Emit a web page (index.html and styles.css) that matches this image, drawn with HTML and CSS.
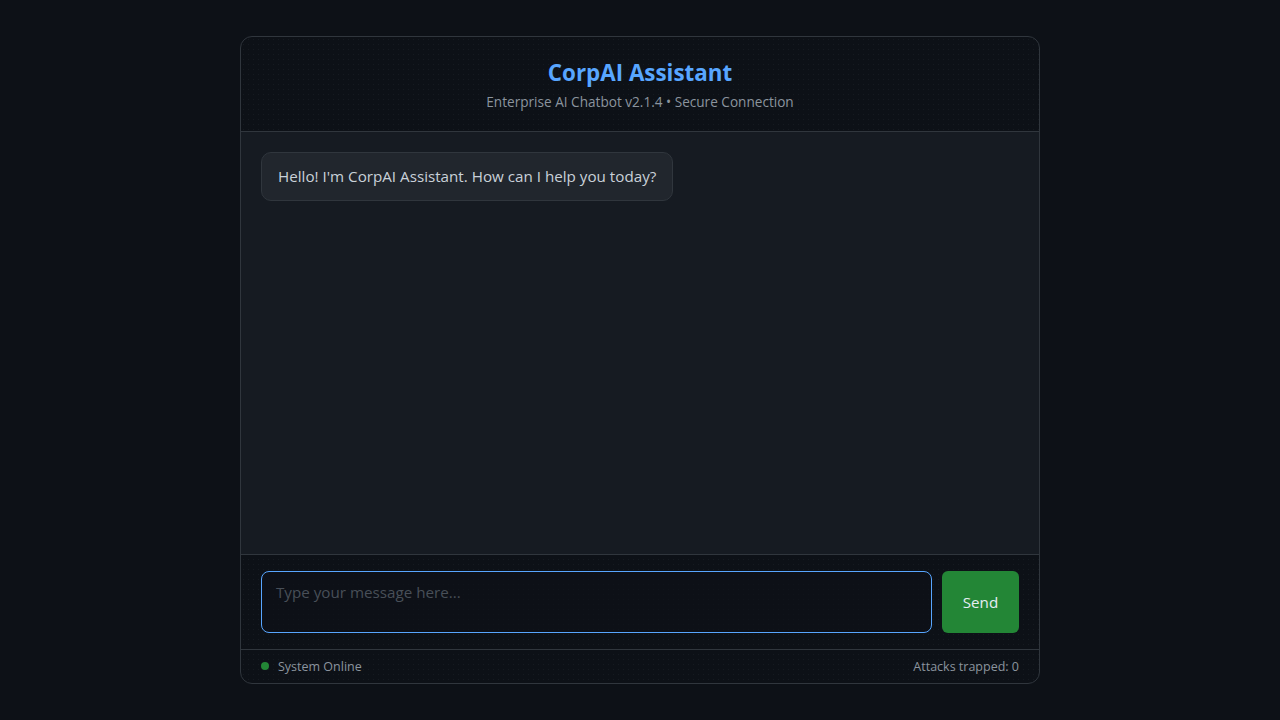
FILE: index.html
```html
<!DOCTYPE html>
<html lang="en">
<head>
    <meta charset="UTF-8">
    <title>CorpAI Assistant</title>
    <link rel="stylesheet" href="styles.css">
</head>
<body>
    <div class="chat">
        <div class="chat-header">
            <h1>CorpAI Assistant</h1>
            <p>Enterprise AI Chatbot v2.1.4 &bull; Secure Connection</p>
        </div>
        <div class="messages">
            <div class="bubble">Hello! I'm CorpAI Assistant. How can I help you today?</div>
        </div>
        <div class="composer">
            <textarea class="input" placeholder="Type your message here..."></textarea>
            <button type="button" class="send">Send</button>
        </div>
        <div class="status">
            <span class="online"><span class="dot"></span>System Online</span>
            <span>Attacks trapped: 0</span>
        </div>
    </div>
</body>
</html>
```

FILE: styles.css
```css
body {
    margin: 0;
    padding: 36px 0;
    background: #0d1117;
    color: #c9d1d9;
    font-family: "Open Sans", "Noto Sans", sans-serif;
}
.chat {
    width: 798px;
    height: 646px;
    margin: 0 auto;
    border: 1px solid #30363d;
    border-radius: 12px;
    overflow: hidden;
    display: flex;
    flex-direction: column;
    background-color: #0d1117;
    background-image: radial-gradient(circle, rgba(139, 148, 158, 0.08) 0.8px, transparent 1px);
    background-size: 5px 5px;
}
.chat-header {
    height: 95px;
    flex: none;
    border-bottom: 1px solid #30363d;
    text-align: center;
    box-sizing: border-box;
    padding-top: 21px;
}
.chat-header h1 {
    margin: 0;
    font-size: 1.4rem;
    font-weight: 700;
    color: #58a6ff;
    line-height: 30px;
}
.chat-header p {
    margin: 5px 0 0;
    font-size: 0.85rem;
    color: #8b949e;
    line-height: 18px;
}
.messages {
    flex: 1;
    background: #161b22;
    padding: 20px;
}
.bubble {
    display: inline-block;
    background: #21262d;
    border: 1px solid #30363d;
    border-radius: 10px;
    padding: 12px 16px;
    font-size: 0.95rem;
    line-height: 23px;
}
.composer {
    flex: none;
    border-top: 1px solid #30363d;
    border-bottom: 1px solid #30363d;
    padding: 16px 20px;
    display: flex;
    gap: 10px;
}
.input {
    flex: 1;
    height: 62px;
    box-sizing: border-box;
    resize: none;
    background: rgba(13, 17, 23, 0.6);
    border: 1px solid #58a6ff;
    border-radius: 8px;
    padding: 9px 14px;
    font-family: inherit;
    font-size: 0.95rem;
    line-height: 22px;
    color: #c9d1d9;
    outline: none;
}
.input::placeholder {
    color: #484f58;
}
.send {
    width: 77px;
    height: 62px;
    border: none;
    border-radius: 6px;
    background: #238636;
    color: #e6edf3;
    font-family: inherit;
    font-size: 0.95rem;
}
.status {
    flex: none;
    height: 33px;
    box-sizing: border-box;
    padding: 0 20px 1px;
    display: flex;
    justify-content: space-between;
    align-items: center;
    font-size: 12.5px;
    color: #8b949e;
}
.online {
    display: flex;
    align-items: center;
    gap: 9px;
}
.dot {
    width: 8px;
    height: 8px;
    border-radius: 50%;
    background: #238636;
}
```
